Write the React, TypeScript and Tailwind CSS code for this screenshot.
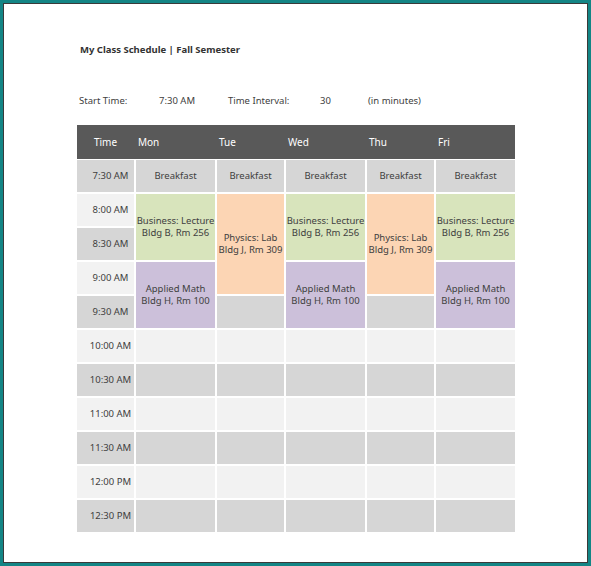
import React from "react";

const times = ["7:30 AM","8:00 AM","8:30 AM","9:00 AM","9:30 AM","10:00 AM","10:30 AM","11:00 AM","11:30 AM","12:00 PM","12:30 PM"];
const rowBg = (i: number) => (i % 2 === 0 ? "bg-[#d6d6d6]" : "bg-[#f2f2f2]");

type Ev = { col: number; row: number; span: number; cls: string; lines: string[] };
const biz = (col: number): Ev[] => [
  { col, row: 1, span: 2, cls: "bg-[#d8e4bc]", lines: ["Business: Lecture", "Bldg B, Rm 256"] },
  { col, row: 3, span: 2, cls: "bg-[#ccc0da]", lines: ["Applied Math", "Bldg H, Rm 100"] },
];
const phy = (col: number): Ev[] => [
  { col, row: 1, span: 3, cls: "bg-[#fcd5b4]", lines: ["Physics: Lab", "Bldg J, Rm 309"] },
];
const events: Ev[] = [...biz(1), ...phy(2), ...biz(3), ...phy(4), ...biz(5)];

export default function App() {
  const cells: React.ReactNode[] = [];
  times.forEach((t, r) => {
    cells.push(
      <div key={"t" + r} className={`${rowBg(r)} flex items-center justify-center pl-[10px]`} style={{ gridColumn: 1, gridRow: r + 1 }}>
        {t}
      </div>
    );
    for (let c = 1; c <= 5; c++) {
      if (r === 0) {
        cells.push(<div key={`b${c}`} className="bg-[#d6d6d6] flex items-center justify-center" style={{ gridColumn: c + 1, gridRow: 1 }}>Breakfast</div>);
        continue;
      }
      const covered = events.some(e => e.col === c && r >= e.row && r < e.row + e.span);
      if (!covered) cells.push(<div key={`e${r}-${c}`} className={rowBg(r)} style={{ gridColumn: c + 1, gridRow: r + 1 }} />);
    }
  });
  events.forEach((e, i) =>
    cells.push(
      <div key={"ev" + i} className={`${e.cls} flex flex-col items-center justify-center leading-[12px]`} style={{ gridColumn: e.col + 1, gridRow: `${e.row + 1} / span ${e.span}` }}>
        {e.lines.map(l => <span key={l}>{l}</span>)}
      </div>
    )
  );

  return (
    <div className="w-[591px] h-[566px] bg-[#138585] p-[3px]">
      <div className="w-full h-full bg-[#3a3a3a] p-[1px]">
        <div className="w-full h-full bg-white text-[#404040] text-[9.5px] font-['DejaVu_Sans',sans-serif] pl-[73px] pt-[39px]">
          <div className="font-bold text-[9.5px] text-[#333] pl-[3px] h-[14px]">My Class Schedule | Fall Semester</div>
          <div className="flex pl-[2px] mt-[37px] h-[14px] items-center">
            <span className="w-[80px]">Start Time:</span>
            <span className="w-[69px]">7:30 AM</span>
            <span className="w-[92px]">Time Interval:</span>
            <span className="w-[48px]">30</span>
            <span>(in minutes)</span>
          </div>
          <div className="mt-[17px] w-[438px]">
            <div className="bg-[#595959] text-white h-[34px] grid grid-cols-[57px_81px_69px_81px_69px_81px] items-center text-[10px]">
              <span className="text-center">Time</span>
              <span className="pl-[4px]">Mon</span>
              <span className="pl-[4px]">Tue</span>
              <span className="pl-[4px]">Wed</span>
              <span className="pl-[4px]">Thu</span>
              <span className="pl-[4px]">Fri</span>
            </div>
            <div className="grid grid-cols-[57px_79px_67px_79px_67px_79px] auto-rows-[32px] gap-[2px] mt-[1px]">
              {cells}
            </div>
          </div>
        </div>
      </div>
    </div>
  );
}
